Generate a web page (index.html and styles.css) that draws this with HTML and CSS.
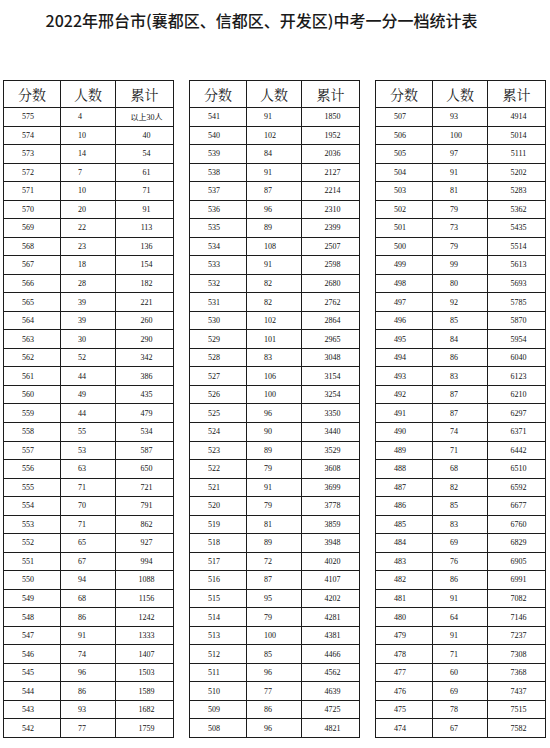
FILE: index.html
```html
<!DOCTYPE html>
<html lang="zh-CN">
<head>
<meta charset="utf-8">
<title>2022年邢台市中考一分一档统计表</title>
<link rel="stylesheet" href="styles.css">
</head>
<body>
<div class="page">
<h1 class="title">2022年邢台市(襄都区、信都区、开发区)中考一分一档统计表</h1>
<div class="tables">
<div class="tbl">
<div class="r h"><span>分数</span><span>人数</span><span>累计</span></div>
<div class="r"><span>575</span><span>4</span><span>以上30人</span></div>
<div class="r"><span>574</span><span>10</span><span>40</span></div>
<div class="r"><span>573</span><span>14</span><span>54</span></div>
<div class="r"><span>572</span><span>7</span><span>61</span></div>
<div class="r"><span>571</span><span>10</span><span>71</span></div>
<div class="r"><span>570</span><span>20</span><span>91</span></div>
<div class="r"><span>569</span><span>22</span><span>113</span></div>
<div class="r"><span>568</span><span>23</span><span>136</span></div>
<div class="r"><span>567</span><span>18</span><span>154</span></div>
<div class="r"><span>566</span><span>28</span><span>182</span></div>
<div class="r"><span>565</span><span>39</span><span>221</span></div>
<div class="r"><span>564</span><span>39</span><span>260</span></div>
<div class="r"><span>563</span><span>30</span><span>290</span></div>
<div class="r"><span>562</span><span>52</span><span>342</span></div>
<div class="r"><span>561</span><span>44</span><span>386</span></div>
<div class="r"><span>560</span><span>49</span><span>435</span></div>
<div class="r"><span>559</span><span>44</span><span>479</span></div>
<div class="r"><span>558</span><span>55</span><span>534</span></div>
<div class="r"><span>557</span><span>53</span><span>587</span></div>
<div class="r"><span>556</span><span>63</span><span>650</span></div>
<div class="r"><span>555</span><span>71</span><span>721</span></div>
<div class="r"><span>554</span><span>70</span><span>791</span></div>
<div class="r"><span>553</span><span>71</span><span>862</span></div>
<div class="r"><span>552</span><span>65</span><span>927</span></div>
<div class="r"><span>551</span><span>67</span><span>994</span></div>
<div class="r"><span>550</span><span>94</span><span>1088</span></div>
<div class="r"><span>549</span><span>68</span><span>1156</span></div>
<div class="r"><span>548</span><span>86</span><span>1242</span></div>
<div class="r"><span>547</span><span>91</span><span>1333</span></div>
<div class="r"><span>546</span><span>74</span><span>1407</span></div>
<div class="r"><span>545</span><span>96</span><span>1503</span></div>
<div class="r"><span>544</span><span>86</span><span>1589</span></div>
<div class="r"><span>543</span><span>93</span><span>1682</span></div>
<div class="r"><span>542</span><span>77</span><span>1759</span></div>
</div>
<div class="tbl">
<div class="r h"><span>分数</span><span>人数</span><span>累计</span></div>
<div class="r"><span>541</span><span>91</span><span>1850</span></div>
<div class="r"><span>540</span><span>102</span><span>1952</span></div>
<div class="r"><span>539</span><span>84</span><span>2036</span></div>
<div class="r"><span>538</span><span>91</span><span>2127</span></div>
<div class="r"><span>537</span><span>87</span><span>2214</span></div>
<div class="r"><span>536</span><span>96</span><span>2310</span></div>
<div class="r"><span>535</span><span>89</span><span>2399</span></div>
<div class="r"><span>534</span><span>108</span><span>2507</span></div>
<div class="r"><span>533</span><span>91</span><span>2598</span></div>
<div class="r"><span>532</span><span>82</span><span>2680</span></div>
<div class="r"><span>531</span><span>82</span><span>2762</span></div>
<div class="r"><span>530</span><span>102</span><span>2864</span></div>
<div class="r"><span>529</span><span>101</span><span>2965</span></div>
<div class="r"><span>528</span><span>83</span><span>3048</span></div>
<div class="r"><span>527</span><span>106</span><span>3154</span></div>
<div class="r"><span>526</span><span>100</span><span>3254</span></div>
<div class="r"><span>525</span><span>96</span><span>3350</span></div>
<div class="r"><span>524</span><span>90</span><span>3440</span></div>
<div class="r"><span>523</span><span>89</span><span>3529</span></div>
<div class="r"><span>522</span><span>79</span><span>3608</span></div>
<div class="r"><span>521</span><span>91</span><span>3699</span></div>
<div class="r"><span>520</span><span>79</span><span>3778</span></div>
<div class="r"><span>519</span><span>81</span><span>3859</span></div>
<div class="r"><span>518</span><span>89</span><span>3948</span></div>
<div class="r"><span>517</span><span>72</span><span>4020</span></div>
<div class="r"><span>516</span><span>87</span><span>4107</span></div>
<div class="r"><span>515</span><span>95</span><span>4202</span></div>
<div class="r"><span>514</span><span>79</span><span>4281</span></div>
<div class="r"><span>513</span><span>100</span><span>4381</span></div>
<div class="r"><span>512</span><span>85</span><span>4466</span></div>
<div class="r"><span>511</span><span>96</span><span>4562</span></div>
<div class="r"><span>510</span><span>77</span><span>4639</span></div>
<div class="r"><span>509</span><span>86</span><span>4725</span></div>
<div class="r"><span>508</span><span>96</span><span>4821</span></div>
</div>
<div class="tbl">
<div class="r h"><span>分数</span><span>人数</span><span>累计</span></div>
<div class="r"><span>507</span><span>93</span><span>4914</span></div>
<div class="r"><span>506</span><span>100</span><span>5014</span></div>
<div class="r"><span>505</span><span>97</span><span>5111</span></div>
<div class="r"><span>504</span><span>91</span><span>5202</span></div>
<div class="r"><span>503</span><span>81</span><span>5283</span></div>
<div class="r"><span>502</span><span>79</span><span>5362</span></div>
<div class="r"><span>501</span><span>73</span><span>5435</span></div>
<div class="r"><span>500</span><span>79</span><span>5514</span></div>
<div class="r"><span>499</span><span>99</span><span>5613</span></div>
<div class="r"><span>498</span><span>80</span><span>5693</span></div>
<div class="r"><span>497</span><span>92</span><span>5785</span></div>
<div class="r"><span>496</span><span>85</span><span>5870</span></div>
<div class="r"><span>495</span><span>84</span><span>5954</span></div>
<div class="r"><span>494</span><span>86</span><span>6040</span></div>
<div class="r"><span>493</span><span>83</span><span>6123</span></div>
<div class="r"><span>492</span><span>87</span><span>6210</span></div>
<div class="r"><span>491</span><span>87</span><span>6297</span></div>
<div class="r"><span>490</span><span>74</span><span>6371</span></div>
<div class="r"><span>489</span><span>71</span><span>6442</span></div>
<div class="r"><span>488</span><span>68</span><span>6510</span></div>
<div class="r"><span>487</span><span>82</span><span>6592</span></div>
<div class="r"><span>486</span><span>85</span><span>6677</span></div>
<div class="r"><span>485</span><span>83</span><span>6760</span></div>
<div class="r"><span>484</span><span>69</span><span>6829</span></div>
<div class="r"><span>483</span><span>76</span><span>6905</span></div>
<div class="r"><span>482</span><span>86</span><span>6991</span></div>
<div class="r"><span>481</span><span>91</span><span>7082</span></div>
<div class="r"><span>480</span><span>64</span><span>7146</span></div>
<div class="r"><span>479</span><span>91</span><span>7237</span></div>
<div class="r"><span>478</span><span>71</span><span>7308</span></div>
<div class="r"><span>477</span><span>60</span><span>7368</span></div>
<div class="r"><span>476</span><span>69</span><span>7437</span></div>
<div class="r"><span>475</span><span>78</span><span>7515</span></div>
<div class="r"><span>474</span><span>67</span><span>7582</span></div>
</div>
</div>
</div>
</body>
</html>
```
FILE: styles.css
```css
html, body {
  margin: 0;
  padding: 0;
  background: #fff;
}

.page {
  width: 550px;
  height: 748px;
  box-sizing: border-box;
  padding: 10px 4px 0 3px;
}

.title {
  margin: 0;
  padding-right: 26px;
  font-family: "Noto Sans CJK SC", "Noto Sans", sans-serif;
  font-size: 16px;
  font-weight: 500;
  line-height: 20px;
  color: #1a1a1a;
  text-align: center;
  white-space: nowrap;
}

.tables {
  margin-top: 50px;
  display: grid;
  grid-template-columns: 171px 171px 171px;
  column-gap: 15px;
}

.tbl {
  height: 658px;
  box-sizing: border-box;
  border: 1px solid #1c1c1c;
  background: #1c1c1c;
  display: grid;
  grid-template-columns: 56fr 54fr 57fr;
  grid-template-rows: 26px repeat(34, 1fr);
  gap: 1px;
}

.r {
  display: contents;
}

.r span {
  background: #fff;
  display: flex;
  align-items: center;
  font-family: "Liberation Serif", "Noto Sans CJK SC", serif;
  font-size: 8px;
  color: #111;
  white-space: nowrap;
}

.r span:nth-child(1) {
  padding-left: 18px;
}

.r span:nth-child(2) {
  padding-left: 17px;
}

.r span:nth-child(3) {
  justify-content: center;
  padding-left: 4px;
}

.r.h span {
  justify-content: center;
  padding-left: 0;
  font-family: "Noto Serif CJK SC", "Noto Sans CJK SC", serif;
  font-size: 14px;
  font-weight: 400;
  color: #222;
}
```
